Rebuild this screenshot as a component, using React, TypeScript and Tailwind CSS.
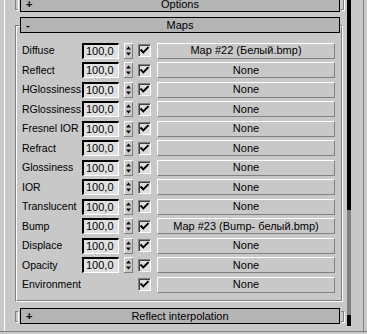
import React from "react";

const rows: { label: string; map: string; spin: boolean }[] = [
  { label: "Diffuse", map: "Map #22 (Белый.bmp)", spin: true },
  { label: "Reflect", map: "None", spin: true },
  { label: "HGlossiness", map: "None", spin: true },
  { label: "RGlossiness", map: "None", spin: true },
  { label: "Fresnel IOR", map: "None", spin: true },
  { label: "Refract", map: "None", spin: true },
  { label: "Glossiness", map: "None", spin: true },
  { label: "IOR", map: "None", spin: true },
  { label: "Translucent", map: "None", spin: true },
  { label: "Bump", map: "Map #23 (Bump- белый.bmp)", spin: true },
  { label: "Displace", map: "None", spin: true },
  { label: "Opacity", map: "None", spin: true },
  { label: "Environment", map: "None", spin: false },
];

function Spinner() {
  return (
    <div className="ml-[5px] h-[16px] w-[9px] shrink-0">
      <svg width="9" height="16" viewBox="0 0 9 16">
        <line x1="0.5" y1="1" x2="0.5" y2="15" stroke="#ffffff" />
        <line x1="0" y1="0.5" x2="9" y2="0.5" stroke="#ffffff" />
        <line x1="8.5" y1="1" x2="8.5" y2="16" stroke="#808080" />
        <line x1="0" y1="15.5" x2="9" y2="15.5" stroke="#808080" />
        <polygon points="2,6.5 7,6.5 4.5,3.5" fill="#000" />
        <polygon points="2,9.5 7,9.5 4.5,12.5" fill="#000" />
      </svg>
    </div>
  );
}

function Check() {
  return (
    <div className="h-[13px] w-[13px] shrink-0 border border-t-[#808080] border-l-[#808080] border-r-white border-b-white bg-[#dedede] shadow-[inset_1px_1px_0_#404040]">
      <svg width="11" height="11" viewBox="0 0 11 11">
        <path d="M2.2 5.2 L4.3 7.4 L8.8 2.8" stroke="#000" strokeWidth="2" fill="none" strokeLinecap="square" />
      </svg>
    </div>
  );
}

function Header({ sign, title }: { sign: string; title: string }) {
  return (
    <div className="flex h-[16px] items-center">
      <div className="ml-[10px] h-[11px] w-[3px] border-l border-t border-b border-[#808080] shadow-[1px_1px_0_#ffffff]" />
      <div className="ml-[2px] grid h-[16px] w-[320px] grid-cols-[20px_1fr_20px] items-center border border-black bg-[#b4b4b4] text-[11px] leading-[14px] text-black">
        <span className="pl-[5px] font-bold">{sign}</span>
        <span className="text-center">{title}</span>
        <span />
      </div>
      <div className="ml-[1px] h-[11px] w-[3px] border-r border-t border-b border-[#808080] shadow-[1px_1px_0_#ffffff]" />
    </div>
  );
}

export default function App() {
  return (
    <div className="flex h-[334px] w-[367px] flex-col overflow-hidden bg-[#c8c8c8] font-['Liberation_Sans',Arial,sans-serif] text-black">
      <div className="flex h-[331px] shrink-0">
        <div className="w-[4px] shrink-0" />
        <div className="flex h-[331px] w-[360px] shrink-0 border-l border-r border-l-white border-r-[#808080]">
          <div className="flex w-[340px] shrink-0 flex-col">
            <div className="mt-[-4px]">
              <Header sign="+" title="Options" />
            </div>
            <div className="ml-[10px] mt-[13px] w-[328px] border border-t-[#808080] border-l-[#808080] border-r-white border-b-white">
              <div className="border border-t-white border-l-white border-r-[#808080] border-b-[#808080] pb-[5.5px]">
                <div className="ml-[3px] mt-[-10px] grid h-[16px] w-[320px] grid-cols-[20px_1fr_20px] items-center border border-black bg-[#b4b4b4] text-[11px] leading-[14px]">
                  <span className="pl-[5px] font-bold">-</span>
                  <span className="text-center">Maps</span>
                  <span />
                </div>
                <div className="mt-[8px] flex flex-col">
                  {rows.map((r) => (
                    <div key={r.label} className="flex h-[19.5px] items-center pl-[5px]">
                      <div className="w-[60px] shrink-0 whitespace-nowrap text-[10.5px] leading-[13px]">{r.label}</div>
                      {r.spin ? (
                        <>
                          <div className="h-[16px] w-[37px] shrink-0 border-t-2 border-l-2 border-r border-b border-t-black border-l-black border-r-white border-b-white bg-[#e0e0e0] pl-[2px] text-[11px] leading-[13px]">
                            100,0
                          </div>
                          <Spinner />
                          <div className="w-[5px] shrink-0" />
                        </>
                      ) : (
                        <div className="w-[56px] shrink-0" />
                      )}
                      <Check />
                      <div className="ml-[6px] flex h-[16px] w-[178px] shrink-0 items-center justify-center border border-t-white border-l-white border-r-[#808080] border-b-[#808080] text-[11px] leading-[13px] whitespace-nowrap">
                        {r.map}
                      </div>
                    </div>
                  ))}
                </div>
              </div>
            </div>
            <div className="mt-[6px]">
              <Header sign="+" title="Reflect interpolation" />
            </div>
          </div>
          <div className="ml-[2px] flex w-[4px] shrink-0 flex-col">
            <div className="h-[210px] bg-black" />
            <div className="h-[105px] bg-[#808080]" />
            <div className="h-[11px] bg-black" />
          </div>
        </div>
      </div>
      <div className="h-[1px] shrink-0 bg-[#808080]" />
    </div>
  );
}
